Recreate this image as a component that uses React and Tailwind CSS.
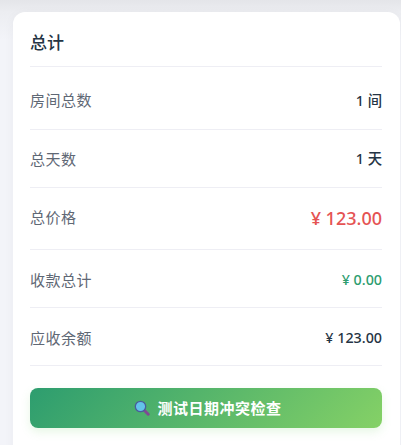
import React from 'react';

const rows = [
  { label: '房间总数', value: '1 间', cls: 'h-[63px] pt-[5px]', labelCls: '', valueCls: 'text-[14.3px] font-medium text-[#253444]' },
  { label: '总天数', value: '1 天', cls: 'h-[58px] pt-px', labelCls: '', valueCls: 'text-[14.3px] font-medium text-[#253444]' },
  { label: '总价格', value: '¥ 123.00', cls: 'h-[62px]', labelCls: 'mb-[3px]', valueCls: 'text-[18px] font-medium text-[#e55353]' },
  { label: '收款总计', value: '¥ 0.00', cls: 'h-[58px] pt-[3px]', labelCls: '', valueCls: 'text-[14.3px] font-medium text-[#2d9d6f]' },
  { label: '应收余额', value: '¥ 123.00', cls: 'h-[58px] pt-[3px]', labelCls: '', valueCls: 'text-[14.3px] font-medium text-[#253444]' },
];

const SearchIcon = () => (
  <svg width="16" height="16" viewBox="0 0 16 16">
    <path d="M10.5 10.5 L14.2 14.2" stroke="#7f4a94" strokeWidth="3" strokeLinecap="round" />
    <circle cx="6.5" cy="6.5" r="5.2" fill="#63c3ea" stroke="#4a5d9c" strokeWidth="1.3" />
  </svg>
);

export default function App() {
  return (
    <div
      className="h-[445px] w-[401px] overflow-hidden bg-[linear-gradient(to_bottom,#e4e5e9_0px,#ecedf1_12px,#f3f4f9_40px)] pt-3 pl-[13px] pr-px"
      style={{ fontFamily: '"Noto Sans", "Noto Sans CJK SC", sans-serif' }}
    >
      <div className="h-[450px] rounded-t-xl bg-white pl-[17px] pr-[18px] shadow-[0_2px_12px_rgba(0,0,0,0.04)]">
        <div className="flex h-[55px] items-center border-b border-[#eeeef4] pt-2">
          <h3 className="text-[17px] font-medium text-[#253444]">总计</h3>
        </div>

        {rows.map((row) => (
          <div key={row.label} className={`flex items-center justify-between border-b border-[#eeeef4] ${row.cls}`}>
            <span className={`text-[15px] tracking-[0.5px] text-[#5f6875] ${row.labelCls}`}>{row.label}</span>
            <span className={row.valueCls}>{row.value}</span>
          </div>
        ))}

        <button className="mt-[22px] flex h-10 w-full items-center justify-center gap-[7px] rounded-lg bg-[linear-gradient(135deg,#2d9d6f,#85d166)] pl-1 text-[15px] font-semibold tracking-[0.5px] text-white shadow-[0_4px_10px_rgba(120,210,110,0.18)]">
          <SearchIcon />
          <span>测试日期冲突检查</span>
        </button>
      </div>
    </div>
  );
}
